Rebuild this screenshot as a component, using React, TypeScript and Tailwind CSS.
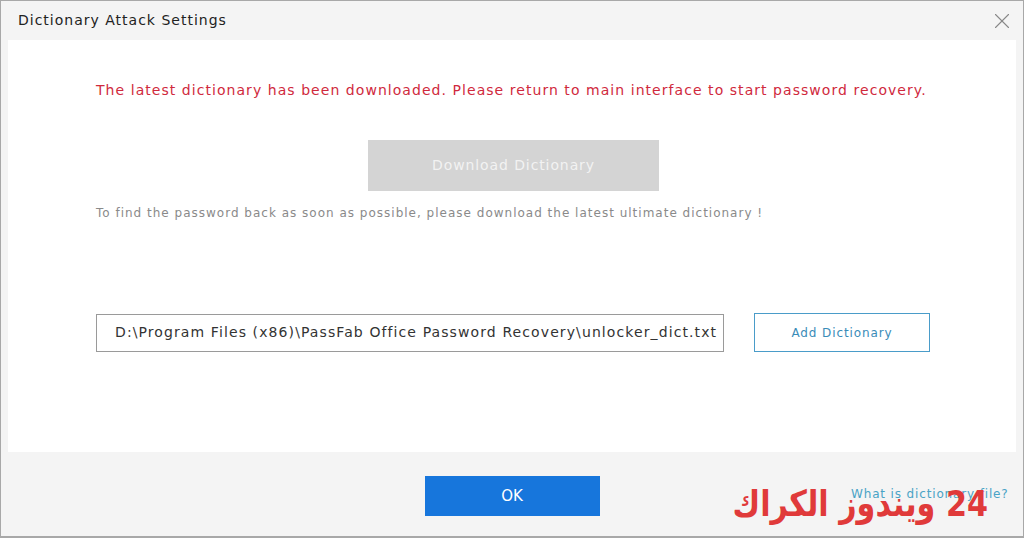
import { X } from 'lucide-react';

export default function App() {
    return (
        <div
            className="w-[1024px] h-[538px] bg-[#f4f4f4] border border-[#a8a8a8] border-b-2 flex flex-col overflow-hidden"
            style={{ fontFamily: '"DejaVu Sans", Verdana, sans-serif' }}
        >
            {/* Title bar */}
            <div className="h-[39px] flex items-center justify-between pl-[17px] pr-[8px]">
                <span className="text-[14px] tracking-[1px] text-[#222]">Dictionary Attack Settings</span>
                <X className="w-[26px] h-[26px] text-[#888]" strokeWidth={1} />
            </div>

            {/* Content */}
            <div className="mx-[7px] h-[412px] bg-white flex flex-col pl-[88px]">
                <p className="mt-[41px] text-[14px] tracking-[1.05px] text-[#d0293d] leading-[18px] whitespace-nowrap">
                    The latest dictionary has been downloaded. Please return to main interface to start password recovery.
                </p>

                <div className="mt-[41px] ml-[272px] w-[291px] h-[51px] bg-[#d4d4d4] flex items-center justify-center text-[14px] tracking-[0.9px] text-[#f2f2f2]">
                    Download Dictionary
                </div>

                <p className="mt-[14px] text-[12px] tracking-[1px] text-[#8a8a8a] leading-[16px] whitespace-nowrap">
                    To find the password back as soon as possible, please download the latest ultimate dictionary !
                </p>

                <div className="mt-[92px] flex items-center gap-[30px]">
                    <div className="w-[628px] h-[38px] border border-[#9a9a9a] flex items-center pl-[18px] text-[14px] tracking-[1.1px] text-[#333] whitespace-nowrap">
                        D:\Program Files (x86)\PassFab Office Password Recovery\unlocker_dict.txt
                    </div>
                    <div className="w-[176px] h-[39px] border border-[#4a9cc9] flex items-center justify-center text-[12px] tracking-[0.9px] text-[#3a8cb8]">
                        Add Dictionary
                    </div>
                </div>
            </div>

            {/* Footer */}
            <div className="relative flex-1 flex items-center justify-center pt-[4px]">
                <div className="w-[175px] h-[40px] bg-[#1776dc] flex items-center justify-center text-[15px] text-white">
                    OK
                </div>
                <span className="absolute left-[850px] top-[33px] text-[12px] tracking-[0.85px] text-[#4aa3c6] whitespace-nowrap">
                    What is dictionary file?
                </span>
                <span
                    dir="rtl"
                    className="absolute left-[687px] top-[30px] w-[300px] text-right text-[36px] font-bold text-[#e03a3a] leading-[44px] scale-x-[0.84] origin-right whitespace-nowrap"
                >
                    24 ويندوز الكراك
                </span>
            </div>
        </div>
    );
}
